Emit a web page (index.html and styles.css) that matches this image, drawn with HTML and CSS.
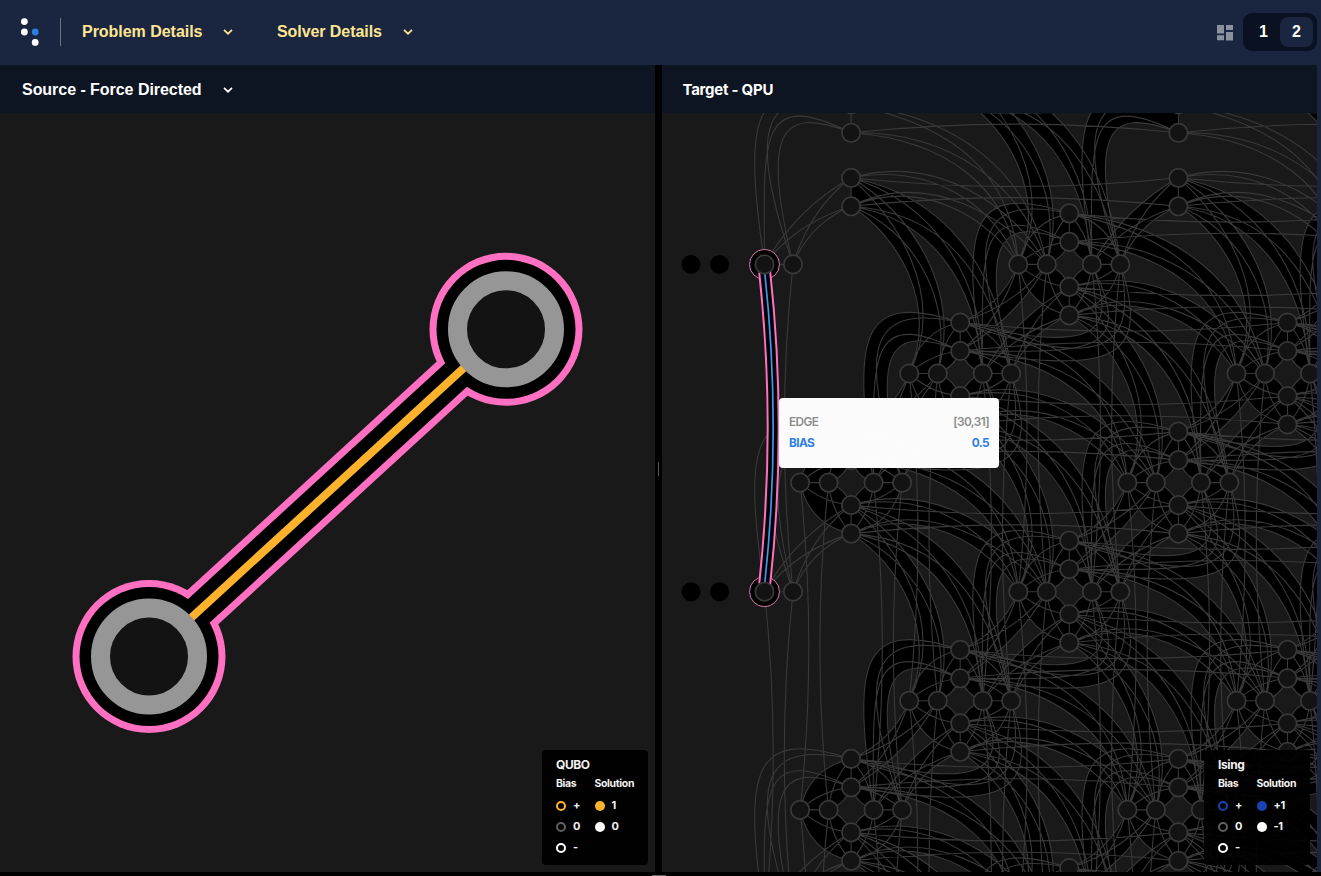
FILE: index.html
```html
<!DOCTYPE html>
<html lang="en">
<head>
<meta charset="utf-8">
<title>Problem Inspector</title>
<link rel="stylesheet" href="styles.css">
</head>
<body>
<div class="app">
  <header class="topbar">
    <svg class="logo" width="20" height="30" viewBox="0 0 20 30"><g fill="#fff"><circle cx="4.4" cy="4.6" r="3.4"/><circle cx="4.4" cy="15" r="3.4"/><circle cx="15.2" cy="25.4" r="3.4"/></g><circle cx="15.2" cy="15" r="3.4" fill="#2b7de1"/></svg>
    <span class="rule"></span>
    <button class="menu problem">Problem Details<svg class="chev" width="10" height="6" viewBox="0 0 10 6"><path d="M1 .8 5 4.7 9 .8"/></svg></button>
    <button class="menu solver">Solver Details<svg class="chev" width="10" height="6" viewBox="0 0 10 6"><path d="M1 .8 5 4.7 9 .8"/></svg></button>
    <svg class="layout-icon" width="16" height="16" viewBox="0 0 16 16" fill="#8a909c"><path d="M0 0h7v8.5H0zM9 0h7v5H9zM0 10.300h7v5H0zM9 7h7v8.500H9z"/></svg>
    <div class="switch"><span>1</span><span class="on">2</span></div>
  </header>
  <main class="panes">
    <section class="pane">
      <div class="pane-head source">Source - Force Directed<svg class="chev" width="10" height="6" viewBox="0 0 10 6"><path d="M1 .8 5 4.7 9 .8"/></svg></div>
      <div class="canvas">
        <svg class="graph" width="655" height="759" viewBox="0 113 655 759">
          <g class="halo"><path d="M149 656.500 506 329.300"/><circle cx="149" cy="656.500" r="76.500"/><circle cx="506" cy="329.300" r="76.500"/></g>
          <g class="shade"><path d="M149 656.500 506 329.300"/><circle cx="149" cy="656.500" r="69.500"/><circle cx="506" cy="329.300" r="69.500"/></g>
          <path class="bias" d="M149 656.500 506 329.300"/>
          <g class="qubit"><circle cx="149" cy="656.500" r="48.500"/><circle cx="506" cy="329.300" r="48.500"/></g>
        </svg>
        <aside class="legend qubo">
          <h4>QUBO</h4>
          <div class="cols">
            <div><h5>Bias</h5><p><i class="ring plus"></i>+</p><p><i class="ring zero"></i>0</p><p><i class="ring minus"></i>-</p></div>
            <div><h5>Solution</h5><p><i class="dot plus"></i>1</p><p><i class="dot minus"></i>0</p></div>
          </div>
        </aside>
      </div>
    </section>
    <div class="splitter"><span></span></div>
    <section class="pane">
      <div class="pane-head target">Target - QPU</div>
      <div class="canvas">
        <svg class="graph" id="qpu" width="655" height="759" viewBox="662 113 655 759"></svg>
        <div class="tooltip">
          <div><span>EDGE</span><span>[30,31]</span></div>
          <div class="value"><span>BIAS</span><span>0.5</span></div>
        </div>
        <aside class="legend ising">
          <h4>Ising</h4>
          <div class="cols">
            <div><h5>Bias</h5><p><i class="ring plus"></i>+</p><p><i class="ring zero"></i>0</p><p><i class="ring minus"></i>-</p></div>
            <div><h5>Solution</h5><p><i class="dot plus"></i>+1</p><p><i class="dot minus"></i>-1</p></div>
          </div>
        </aside>
      </div>
    </section>
  </main>
  <footer class="bottom"><span></span></footer>
</div>
<script src="graph.js"></script>
</body>
</html>
```
FILE: styles.css
```css
* { box-sizing: border-box; }
body { margin: 0; width: 1321px; height: 876px; overflow: hidden; background: #1a263f; font-family: "Liberation Sans", Arial, sans-serif; }
.app { display: flex; flex-direction: column; height: 876px; }
.topbar { height: 65px; flex: none; display: flex; align-items: center; padding: 0 4px 2px 20px; background: #1a263f; }
.logo { display: block; }
.rule { width: 1px; height: 28px; margin: 0 21px 0 20px; background: #6d7380; }
.menu { display: flex; align-items: center; padding: 0; border: 0; background: none; color: #ffe592; font: bold 16px "Liberation Sans", Arial, sans-serif; letter-spacing: -.03px; white-space: nowrap; }
.menu.problem { width: 195px; }
.menu.solver { letter-spacing: -.07px; }
.chev { margin: 1px 0 0 21px; fill: none; stroke: currentColor; stroke-width: 1.7; }
.layout-icon { display: block; margin: 3px 10px 0 auto; }
.switch { width: 74px; height: 38px; padding: 4px; display: flex; border-radius: 9px; background: #0a1120; color: #fff; font-size: 16px; font-weight: bold; }
.switch span { flex: 1; display: flex; align-items: center; justify-content: center; border-radius: 8px; }
.switch .on { background: #1a263f; }
.panes { height: 807px; display: flex; padding-right: 4px; }
.pane { flex: 1; }
.pane-head { height: 48px; display: flex; align-items: center; padding: 1px 0 0 22px; background: #0d1422; color: #fff; font-weight: bold; font-size: 16px; letter-spacing: -.04px; }
.pane-head .chev { margin-top: 0; }
.pane-head.target { padding: 0 0 0 20.500px; font-family: Inter, sans-serif; font-size: 15px; font-weight: 650; letter-spacing: -.26px; }
.canvas { position: relative; height: 759px; background: #191919; }
.graph { display: block; }
.splitter { width: 7px; background: #000; display: flex; align-items: center; justify-content: center; }
.splitter span { width: 1px; height: 14px; background: #555; }
.bottom { height: 4px; background: #000; display: flex; align-items: flex-end; padding-left: 652px; }
.bottom span { width: 14px; height: 1px; background: #666; }
.halo { fill: #ff70c3; stroke: none; }
.halo path { stroke: #ff70c3; stroke-width: 46; }
.shade path { stroke: #000; stroke-width: 32; }
.bias { stroke: #ffb32c; stroke-width: 8; }
.qubit { fill: #131313; stroke: #969696; stroke-width: 19; }
.legend { position: absolute; right: 7px; bottom: 7px; width: 106px; height: 115px; padding: 6px 0 0 14px; border-radius: 4px; background: rgba(0,0,0,.93); color: #f2f2f2; font: 700 11px/21px Inter, sans-serif; }
.legend h4, .legend h5, .legend p { margin: 0; font-weight: 700; }
.legend h4 { font-size: 12px; line-height: 17px; letter-spacing: -.4px; }
.legend h5 { font-size: 10.5px; line-height: 22px; letter-spacing: -.35px; }
.legend p { height: 21px; display: flex; align-items: center; letter-spacing: -.4px; }
.cols { display: flex; }
.cols > div:first-child { width: 38.500px; }
.ring, .dot { width: 10px; height: 10px; margin-right: 7px; border-radius: 50%; }
.ring { border: 2px solid #fff; }
.ring.zero { border-color: #606060; }
.dot { background: #fff; }
.qubo .ring.plus { border-color: #ffb32c; }
.qubo .dot.plus { background: #ffb32c; }
.ising .ring.plus { border-color: #1943b5; }
.ising .dot.plus { background: #1943b5; }
.tooltip { position: absolute; left: 117px; top: 285px; width: 220px; height: 70px; padding: 14px 10px; border-radius: 4px; background: rgba(255,255,255,.985); color: #8c8c8c; font: 600 11.8px/21px Inter, sans-serif; letter-spacing: -.6px; }
.tooltip div { display: flex; justify-content: space-between; }
.tooltip .value { color: #2e7fe6; font-weight: 700; }
.tile { fill: #000; stroke: none; }
.coupler { fill: none; stroke: #393939; stroke-width: 1.1; }
.node { fill: #131313; stroke: #393939; stroke-width: 1.700; }
.dead { fill: #000; }
.mark { fill: #000; stroke: #d878ad; stroke-width: 1; }
.edge-halo { fill: none; stroke: #ff70c3; stroke-width: 13; }
.edge-shade { fill: none; stroke: #000; stroke-width: 9; }
.edge-bias { fill: none; stroke: #4196f5; stroke-width: 1.700; }
```
FILE: graph.js
```js
// Draws a Pegasus lattice: each cell holds four V nodes (a column) and four H nodes (a row).
const STEP = 109.1, OFF = [-51, -22.5, 22.5, 51];
const cells = new Map();
const key = (i, j) => i + ',' + j;
for (let i = 0; i < 9; i++) for (let j = -3; j < 9; j++) {
  if ((((i + j) % 3) + 3) % 3 !== 0) continue;
  const x = 742 + i * STEP, y = 264.400 + j * STEP;
  cells.set(key(i, j), {
    i, j, x, y,
    v: OFF.map(o => i > 0 ? [x, y + o] : null),
    h: OFF.map((o, k) => j >= 0 && (i > 0 || k > 1) ? [x + o, y] : null)
  });
}
const tiles = [], lines = [];
const p = a => a[0].toFixed(1) + ' ' + a[1].toFixed(1);
const add = (a, b) => [a[0] + b[0], a[1] + b[1]];
const mirror = a => [-a[1], -a[0]];
const curve = (a, c1, c2, b) => [a, c1, c2, b];
const quad = (a, q, b) => curve(a, [a[0] + (q[0] - a[0]) * 2 / 3, a[1] + (q[1] - a[1]) * 2 / 3], [b[0] + (q[0] - b[0]) * 2 / 3, b[1] + (q[1] - b[1]) * 2 / 3], b);
const line = c => lines.push(`M${p(c[0])}C${p(c[1])} ${p(c[2])} ${p(c[3])}`);
const tile = (a, b) => tiles.push(`<path class="tile" d="M${p(a[0])}C${p(a[1])} ${p(a[2])} ${p(a[3])}L${p(b[3])}C${p(b[2])} ${p(b[1])} ${p(b[0])}Z"/>`);

// Control points relative to the start node, for a given displacement.
const shapes = {
  loop: ([dx, dy]) => [[-40 + .62 * dx - .3 * (dy - 131), -31 + .55 * (dx + 58) + .45 * (dy - 131)], [-87 - .7 * (dy - 131), .3 * dy - 33]],
  near: ([dx, dy]) => { const q = [dx / 2 - 12, dy / 2 - 12]; return [[q[0] * 2 / 3, q[1] * 2 / 3], [dx + (q[0] - dx) * 2 / 3, dy + (q[1] - dy) * 2 / 3]]; },
  fall: ([dx, dy]) => [[.45 * dx + 19, 28 - .22 * (dx - 58) + .4 * (dy - 167)], [.5 * dx + 59 + .32 * (dy - 167), 95 - .3 * (dx - 58) + .8 * (dy - 167)]]
};
function make(shape, a, b, flip) {
  let d = [b[0] - a[0], b[1] - a[1]];
  if (flip) d = mirror(d);
  let [c1, c2] = shapes[shape](d);
  if (flip) { c1 = mirror(c1); c2 = mirror(c2); }
  return curve(a, add(a, c1), add(a, c2), b);
}
// Couples every node of `as` with every node of `bs`; `band` names the two outer pairs.
function bundle(shape, as, bs, flip, filled, band) {
  if ([...as, ...bs].some(n => !n)) return;
  as.forEach(a => bs.forEach(b => line(make(shape, a, b, flip))));
  if (filled) tile(make(shape, as[band[0]], bs[band[1]], flip), make(shape, as[band[2]], bs[band[3]], flip));
}
for (const c of cells.values()) {
  const { v, h, i, j, x, y } = c;
  if (v[0] && h[0]) {
    for (const sx of [-1, 1]) for (const sy of [-1, 1]) {
      const P = (a, b) => [x + sx * a, y + sy * b];
      const outer = quad(P(0, 51), P(42, 42), P(51, 0)), inner = quad(P(0, 22.5), P(6, 6), P(22.5, 0));
      tile(outer, inner);
      line(outer); line(inner);
      line(quad(P(0, 51), P(20, 29), P(22.5, 0)));
      line(quad(P(0, 22.5), P(29, 20), P(51, 0)));
    }
  }
  for (const n of [v, h]) for (const k of [0, 2]) if (n[k] && n[k + 1]) lines.push(`M${p(n[k])}L${p(n[k + 1])}`);
  const east = cells.get(key(i + 3, j)), south = cells.get(key(i, j + 3));
  for (let k = 0; k < 4; k++) {
    const s = k % 2 ? -17.400 : 17.400;
    if (east && v[k]) line(quad(v[k], [x + STEP * 1.5, v[k][1] + s], east.v[k]));
    if (south && h[k]) line(quad(h[k], [h[k][0] + s, y + STEP * 1.5], south.h[k]));
  }
  const sw = cells.get(key(i - 1, j + 1));
  if (sw) {
    const f = sw.i > 0;
    bundle('loop', v.slice(0, 2), sw.h.slice(2), false, f, [0, 0, 1, 1]);
    bundle('near', v.slice(2), sw.h.slice(2), false, f, [0, 0, 1, 1]);
    bundle('loop', h.slice(2), sw.v.slice(0, 2), true, true, [1, 1, 0, 0]);
    bundle('near', h.slice(0, 2), sw.v.slice(0, 2), true, true, [1, 1, 0, 0]);
  }
  const low = cells.get(key(i + 1, j + 2));
  if (low) {
    bundle('fall', v.slice(2), low.h.slice(0, 2), false, true, [1, 0, 0, 1]);
    bundle('fall', v.slice(2), low.h.slice(2), false, true, [1, 0, 0, 1]);
  }
  const side = cells.get(key(i + 2, j + 1));
  if (side) {
    bundle('fall', side.h.slice(0, 2), v.slice(2), true, j >= 0, [0, 1, 1, 0]);
    bundle('fall', side.h.slice(0, 2), v.slice(0, 2), true, j >= 0, [0, 1, 1, 0]);
  }
}
const nodes = [];
for (const c of cells.values()) for (const n of [...c.v, ...c.h]) if (n) nodes.push(`<circle class="node" cx="${n[0].toFixed(1)}" cy="${n[1].toFixed(1)}" r="9.200"/>`);
const ys = [264.400, 591.700];
const edge = 'M764.700 272Q781.700 428 764.700 584';
document.getElementById('qpu').innerHTML = tiles.join('') + `<path class="coupler" d="${lines.join('')}"/>`
  + ys.map(y => [691, 719.600].map(x => `<circle class="dead" cx="${x}" cy="${y}" r="9.500"/>`).join('') + `<circle class="mark" cx="764.500" cy="${y}" r="15"/>`).join('')
  + `<path class="edge-halo" d="${edge}"/><path class="edge-shade" d="${edge}"/><path class="edge-bias" d="${edge}"/>`
  + nodes.join('');
```
